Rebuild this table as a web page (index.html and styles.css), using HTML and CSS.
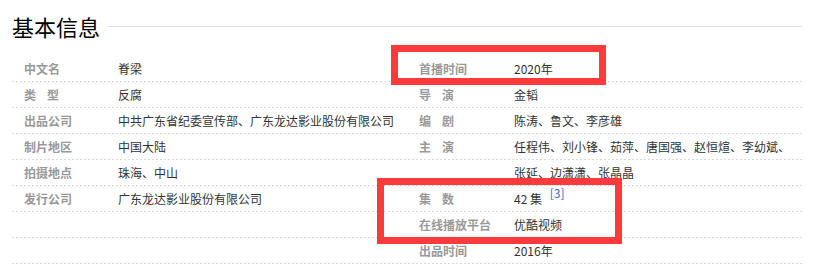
FILE: index.html
```html
<!DOCTYPE html>
<html lang="zh-CN">
<head>
    <meta charset="UTF-8">
    <title>基本信息</title>
    <link rel="stylesheet" href="styles.css">
</head>
<body>
    <div class="basic-info">
        <div class="title-bar">
            <h2>基本信息</h2>
            <span class="title-line"></span>
        </div>
        <div class="info-cols">
            <dl class="info-col left">
                <div class="item"><dt>中文名</dt><dd>脊梁</dd></div>
                <div class="item"><dt>类&nbsp;&nbsp;&nbsp;&nbsp;型</dt><dd>反腐</dd></div>
                <div class="item"><dt>出品公司</dt><dd>中共广东省纪委宣传部、广东龙达影业股份有限公司</dd></div>
                <div class="item"><dt>制片地区</dt><dd>中国大陆</dd></div>
                <div class="item"><dt>拍摄地点</dt><dd>珠海、中山</dd></div>
                <div class="item"><dt>发行公司</dt><dd>广东龙达影业股份有限公司</dd></div>
                <div class="item"><dt></dt><dd></dd></div>
                <div class="item"><dt></dt><dd></dd></div>
            </dl>
            <dl class="info-col right">
                <div class="item"><dt>首播时间</dt><dd>2020年</dd></div>
                <div class="item"><dt>导&nbsp;&nbsp;&nbsp;&nbsp;演</dt><dd>金韬</dd></div>
                <div class="item"><dt>编&nbsp;&nbsp;&nbsp;&nbsp;剧</dt><dd>陈涛、鲁文、李彦雄</dd></div>
                <div class="item"><dt>主&nbsp;&nbsp;&nbsp;&nbsp;演</dt><dd>任程伟、刘小锋、茹萍、唐国强、赵恒煊、李幼斌、</dd></div>
                <div class="item"><dt></dt><dd>张延、边潇潇、张晶晶</dd></div>
                <div class="item"><dt>集&nbsp;&nbsp;&nbsp;&nbsp;数</dt><dd>42 集 <sup class="ref">[3]</sup></dd></div>
                <div class="item"><dt>在线播放平台</dt><dd>优酷视频</dd></div>
                <div class="item"><dt>出品时间</dt><dd>2016年</dd></div>
            </dl>
        </div>

        <!-- highlight frames -->
        <div class="mark mark-premiere"></div>
        <div class="mark mark-episodes"></div>
    </div>
</body>
</html>
```

FILE: styles.css
```css
* {
    box-sizing: border-box;
    margin: 0;
    padding: 0;
}

body {
    font-family: "Noto Sans CJK SC", "Liberation Sans", sans-serif;
    font-size: 12px;
    color: #333;
    background: #fff;
}

.basic-info {
    position: relative;
    width: 802px;
    padding-left: 12px;
}

.title-bar {
    display: flex;
    align-items: center;
    height: 53px;
    padding-bottom: 1px;
}

.title-bar h2 {
    font-size: 22px;
    font-weight: 400;
    color: #000;
    line-height: 26px;
    margin-right: 8px;
    margin-top: -1px;
}

.title-line {
    flex: 1;
    height: 1px;
    background: #e0e0e0;
    margin-top: 1px;
}

.info-cols {
    display: flex;
    gap: 2px;
    padding-top: 3px;
}

.info-col {
    display: flex;
    flex-direction: column;
}

.info-col.left {
    width: 398px;
}

.info-col.right {
    width: 390px;
}

.item {
    display: flex;
    height: 26px;
    line-height: 25px;
    padding-bottom: 1px;
    background: linear-gradient(to right, #d9d9d9 50%, transparent 0) repeat-x left bottom / 4px 1px;
    white-space: nowrap;
}

.left .item {
    padding-left: 12px;
}

.right .item {
    padding-left: 7px;
}

dt {
    width: 95px;
    flex-shrink: 0;
    color: #999;
    font-weight: 700;
}

.left dt {
    width: 94px;
}

dd {
    color: #333;
}

.ref {
    color: #3366cc;
    font-size: 12px;
    vertical-align: 0;
    position: relative;
    top: -6px;
    margin-left: 5px;
}

.mark {
    position: absolute;
    border: 7px solid #fa3a3c;
}

.mark-premiere {
    left: 391px;
    top: 45px;
    width: 215px;
    height: 40px;
}

.mark-episodes {
    left: 377px;
    top: 178px;
    width: 245px;
    height: 66px;
}
```
